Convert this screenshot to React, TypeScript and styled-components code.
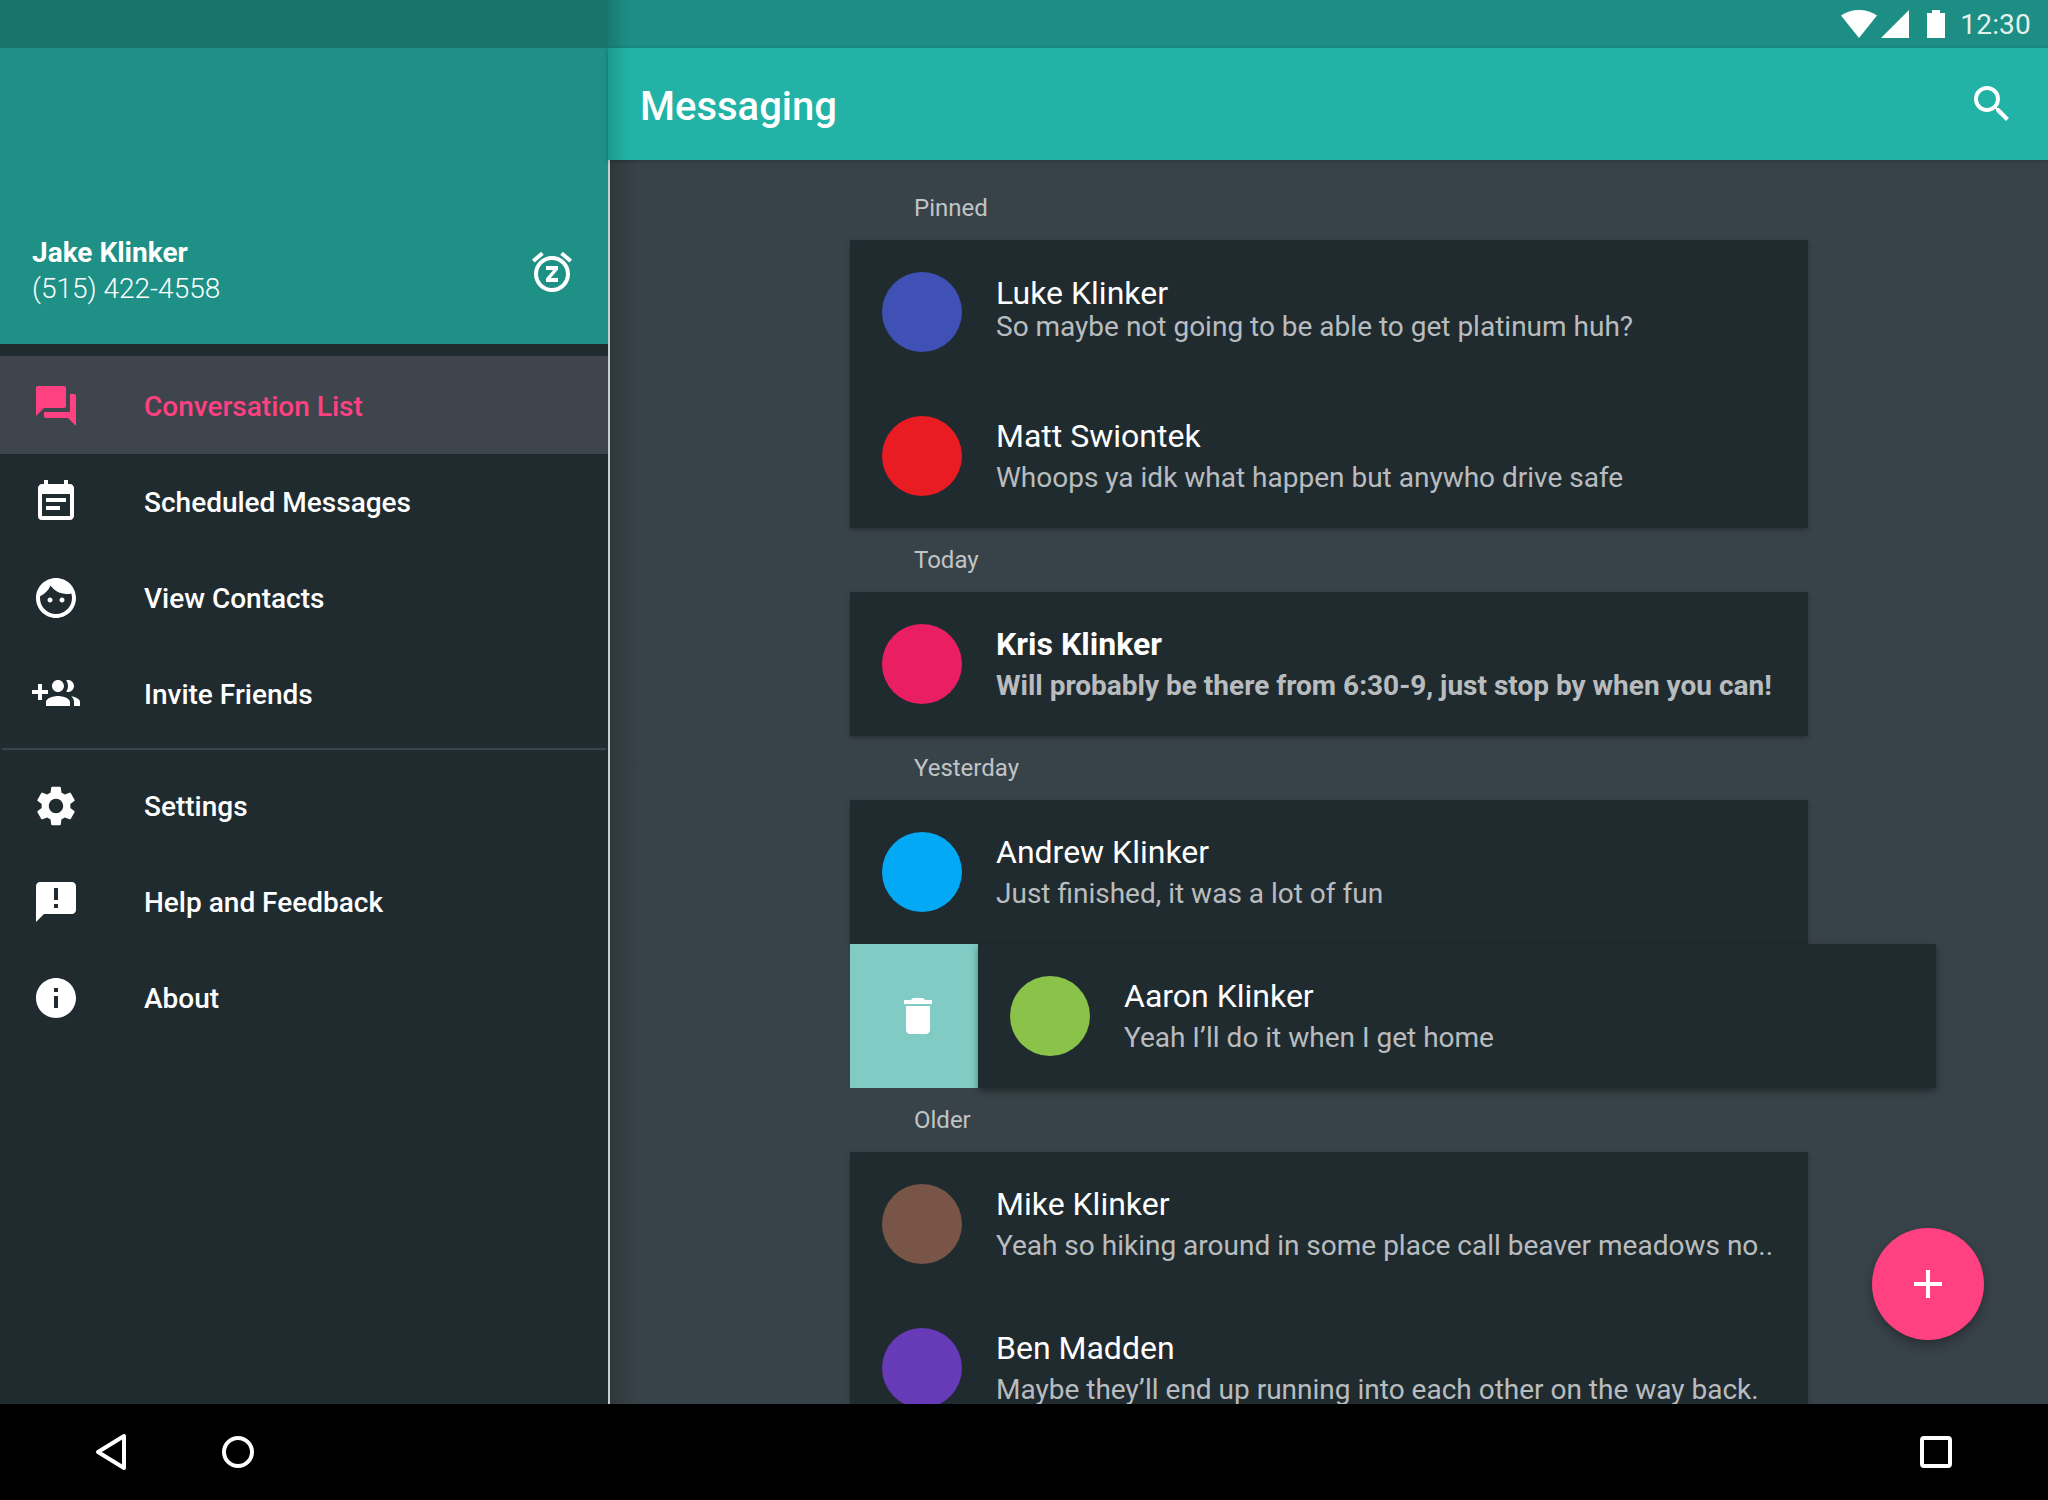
import React from 'react';
import styled, { createGlobalStyle } from 'styled-components';
import {
  MdAdd,
  MdAnnouncement,
  MdDelete,
  MdEventNote,
  MdForum,
  MdInfo,
  MdSearch,
  MdSettings,
  MdSnooze,
} from 'react-icons/md';

const GlobalStyle = createGlobalStyle`
  html, body {
    margin: 0;
    padding: 0;
    height: 1500px;
    overflow: hidden;
    background: #000;
  }
  * {
    box-sizing: border-box;
  }
`;

const Screen = styled.div`
  width: 2048px;
  height: 1500px;
  display: flex;
  flex-direction: column;
  overflow: hidden;
  font-family: Roboto, "Liberation Sans", sans-serif;
  color: #fff;
`;

const Body = styled.div`
  flex: 1;
  min-height: 0;
  display: flex;
`;

const Drawer = styled.aside`
  width: 608px;
  flex-shrink: 0;
  display: flex;
  flex-direction: column;
  background: #202b30;
`;

const DrawerStatus = styled.div`
  height: 48px;
  background: #18736b;
`;

const DrawerHeader = styled.div`
  height: 296px;
  padding: 187px 32px 0;
  display: flex;
  justify-content: space-between;
  background: #1e9085;
`;

const Account = styled.div`
  display: flex;
  flex-direction: column;
`;

const AccountName = styled.div`
  font-size: 28px;
  line-height: 36px;
  font-weight: 700;
`;

const AccountPhone = styled.div`
  font-size: 28px;
  line-height: 36px;
  font-weight: 300;
`;

const SnoozeButton = styled.div`
  display: flex;
  font-size: 48px;
  height: 48px;
  margin-top: 13px;
`;

const Menu = styled.nav`
  padding-top: 12px;
  display: flex;
  flex-direction: column;
`;

const MenuRow = styled.div<{ $active?: boolean }>`
  height: ${(p) => (p.$active ? 98 : 96)}px;
  padding: ${(p) => (p.$active ? '2px' : '0')} 0 0 32px;
  display: flex;
  align-items: center;
  gap: 64px;
  font-size: 28px;
  font-weight: 500;
  background: ${(p) => (p.$active ? '#3e454c' : 'transparent')};
  color: ${(p) => (p.$active ? '#ff4081' : '#fff')};

  & > svg {
    flex-shrink: 0;
  }
`;

const MenuDivider = styled.div`
  height: 2px;
  margin: 6px 2px 8px;
  background: #37444a;
`;

const Main = styled.main`
  position: relative;
  flex: 1;
  min-width: 0;
  display: flex;
  flex-direction: column;
`;

const StatusBar = styled.div`
  height: 48px;
  padding-right: 17px;
  display: flex;
  justify-content: flex-end;
  align-items: center;
  background: linear-gradient(90deg, rgba(0, 0, 0, 0.14), transparent 20px), #1c8e84;
`;

const StatusIcons = styled.div`
  display: flex;
  align-items: center;
  margin-right: 15px;
  height: 48px;
`;

const Clock = styled.span`
  font-size: 28px;
  letter-spacing: 0.2px;
  color: rgba(255, 255, 255, 0.9);
`;

const Toolbar = styled.header`
  position: relative;
  z-index: 2;
  height: 112px;
  padding: 0 32px;
  display: flex;
  align-items: center;
  justify-content: space-between;
  background: linear-gradient(90deg, rgba(0, 0, 0, 0.14), transparent 20px), #22b3a6;
  box-shadow: 0 1px 4px rgba(0, 0, 0, 0.25);
`;

const Title = styled.h1`
  margin: 4px 0 0;
  font-size: 40px;
  font-weight: 500;
`;

const Content = styled.div`
  flex: 1;
  min-height: 0;
  overflow: hidden;
  padding-left: 240px;
  border-left: 2px solid #c9cccd;
  background: linear-gradient(90deg, rgba(0, 0, 0, 0.18), transparent 30px), #384349;
`;

const Feed = styled.div`
  width: 958px;
  display: flex;
  flex-direction: column;
`;

const SectionLabel = styled.div<{ $first?: boolean }>`
  height: ${(p) => (p.$first ? 80 : 64)}px;
  padding: ${(p) => (p.$first ? 32 : 16)}px 0 0 64px;
  font-size: 24px;
  line-height: 32px;
  color: rgba(255, 255, 255, 0.7);
`;

const Card = styled.section`
  background: #202b30;
  box-shadow: 0 2px 5px rgba(0, 0, 0, 0.3);
`;

const Row = styled.div`
  height: 144px;
  padding: 32px 32px 0;
  display: flex;
  align-items: flex-start;
  gap: 34px;
  background: #202b30;

  & + & {
    box-shadow: inset 0 -1px 0 #1f2a2f, 0 -1px 0 #1f2a2f;
  }
`;

const Avatar = styled.div<{ $color: string }>`
  width: 80px;
  height: 80px;
  flex-shrink: 0;
  border-radius: 50%;
  background: ${(p) => p.$color};
`;

const RowText = styled.div<{ $unread?: boolean }>`
  min-width: 0;
  display: flex;
  flex-direction: column;
  font-weight: ${(p) => (p.$unread ? 700 : 400)};
`;

const Name = styled.div<{ $tight?: boolean }>`
  margin-top: ${(p) => (p.$tight ? 1 : 0)}px;
  font-size: 32px;
  line-height: 40px;
  color: #fff;
`;

const Snippet = styled.div<{ $tight?: boolean }>`
  margin-top: ${(p) => (p.$tight ? -6 : 2)}px;
  font-size: 28px;
  line-height: 40px;
  white-space: nowrap;
  color: rgba(255, 255, 255, 0.7);
`;

const SwipedRow = styled.div`
  position: relative;
  width: 1086px;
  height: 144px;
  display: flex;
`;

const DeleteBacking = styled.div`
  width: 128px;
  flex-shrink: 0;
  padding-left: 8px;
  display: flex;
  align-items: center;
  justify-content: center;
  background: #80cbc4;
  font-size: 48px;
`;

const SwipedContent = styled(Row)`
  flex: 1;
  box-shadow: 0 3px 7px rgba(0, 0, 0, 0.4);
`;

const Fab = styled.button`
  position: absolute;
  right: 64px;
  bottom: 64px;
  width: 112px;
  height: 112px;
  padding: 0;
  display: flex;
  align-items: center;
  justify-content: center;
  border: none;
  border-radius: 50%;
  color: #fff;
  background: #ff4081;
  font-size: 48px;
  box-shadow: 0 6px 12px rgba(0, 0, 0, 0.3);
`;

const NavBar = styled.footer`
  height: 96px;
  flex-shrink: 0;
  padding: 0 96px 0 95px;
  display: flex;
  align-items: center;
  gap: 95px;
  background: #000;

  & > :last-child {
    margin-left: auto;
  }
`;

// older material drawings, the ones in the package have changed
const GroupAddIcon: React.FC<{ size?: number }> = ({ size }) => (
  <svg width={size} height={size} viewBox="0 0 24 24" fill="currentColor">
    <path d="M8 10H5V7H3v3H0v2h3v3h2v-3h3v-2zm10 1c1.66 0 2.99-1.34 2.99-3S19.66 5 18 5c-.32 0-.63.05-.91.14.57.81.9 1.79.9 2.86s-.34 2.04-.9 2.86c.28.09.59.14.91.14zm-5 0c1.66 0 2.99-1.34 2.99-3S14.66 5 13 5s-3 1.34-3 3 1.34 3 3 3zm6.62 2.16c.83.73 1.38 1.66 1.38 2.84v2h3v-2c0-1.54-2.37-2.49-4.38-2.84zM13 13c-2 0-6 1-6 3v2h12v-2c0-2-4-3-6-3z" />
  </svg>
);

const FaceIcon: React.FC<{ size?: number }> = ({ size }) => (
  <svg width={size} height={size} viewBox="0 0 24 24" fill="currentColor">
    <path d="M9 11.750c-.69 0-1.250.56-1.250 1.250s.56 1.250 1.250 1.250 1.250-.56 1.250-1.250-.56-1.250-1.250-1.250zm6 0c-.69 0-1.250.56-1.250 1.250s.56 1.250 1.250 1.250 1.250-.56 1.250-1.250-.56-1.250-1.250-1.250zM12 2C6.480 2 2 6.480 2 12s4.480 10 10 10 10-4.480 10-10S17.520 2 12 2zm0 18c-4.410 0-8-3.590-8-8 0-.29.02-.58.05-.86 2.360-1.050 4.230-2.980 5.210-5.370C11.070 8.330 14.050 10 17.420 10c.78 0 1.530-.09 2.250-.26.21.71.33 1.470.33 2.260 0 4.410-3.590 8-8 8z" />
  </svg>
);

const menuTop = [
  { label: 'Conversation List', icon: MdForum, active: true },
  { label: 'Scheduled Messages', icon: MdEventNote },
  { label: 'View Contacts', icon: FaceIcon },
  { label: 'Invite Friends', icon: GroupAddIcon },
];

const menuBottom = [
  { label: 'Settings', icon: MdSettings },
  { label: 'Help and Feedback', icon: MdAnnouncement },
  { label: 'About', icon: MdInfo },
];

const renderMenuRow = (item: { label: string; icon: React.ComponentType<{ size?: number }>; active?: boolean }) => {
  const Icon = item.icon;
  return (
    <MenuRow key={item.label} $active={item.active}>
      <Icon size={48} />
      {item.label}
    </MenuRow>
  );
};

const Conversation: React.FC<{
  name: string;
  snippet: string;
  color: string;
  unread?: boolean;
  tight?: boolean;
}> = ({ name, snippet, color, unread, tight }) => (
  <Row>
    <Avatar $color={color} />
    <RowText $unread={unread}>
      <Name $tight={tight}>{name}</Name>
      <Snippet $tight={tight}>{snippet}</Snippet>
    </RowText>
  </Row>
);

const App: React.FC = () => (
  <Screen>
    <GlobalStyle />
    <Body>
      <Drawer>
        <DrawerStatus />
        <DrawerHeader>
          <Account>
            <AccountName>Jake Klinker</AccountName>
            <AccountPhone>(515) 422-4558</AccountPhone>
          </Account>
          <SnoozeButton>
            <MdSnooze />
          </SnoozeButton>
        </DrawerHeader>
        <Menu>
          {menuTop.map(renderMenuRow)}
          <MenuDivider />
          {menuBottom.map(renderMenuRow)}
        </Menu>
      </Drawer>
      <Main>
        <StatusBar>
          <StatusIcons>
            <svg width="104" height="28" viewBox="0 0 104 28" fill="#fff">
              <path d="M0 5.500C5 2 11 0 18 0s13 2 18 5.500L18 28z" />
              <path d="M40 28 68 0v28z" />
              <path d="M86 28V3h5V0h8v3h5v25z" />
            </svg>
          </StatusIcons>
          <Clock>12:30</Clock>
        </StatusBar>
        <Toolbar>
          <Title>Messaging</Title>
          <MdSearch size={48} />
        </Toolbar>
        <Content>
          <Feed>
            <SectionLabel $first>Pinned</SectionLabel>
            <Card>
              <Conversation name="Luke Klinker" snippet="So maybe not going to be able to get platinum huh?" color="#3f51b5" tight />
              <Conversation name="Matt Swiontek" snippet="Whoops ya idk what happen but anywho drive safe" color="#e91c23" />
            </Card>
            <SectionLabel>Today</SectionLabel>
            <Card>
              <Conversation name="Kris Klinker" snippet="Will probably be there from 6:30-9, just stop by when you can!" color="#e91e63" unread />
            </Card>
            <SectionLabel>Yesterday</SectionLabel>
            <Card>
              <Conversation name="Andrew Klinker" snippet="Just finished, it was a lot of fun" color="#03a9f4" />
            </Card>
            <SwipedRow>
              <DeleteBacking>
                <MdDelete />
              </DeleteBacking>
              <SwipedContent>
                <Avatar $color="#8bc34a" />
                <RowText>
                  <Name>Aaron Klinker</Name>
                  <Snippet>Yeah I’ll do it when I get home</Snippet>
                </RowText>
              </SwipedContent>
            </SwipedRow>
            <SectionLabel>Older</SectionLabel>
            <Card>
              <Conversation name="Mike Klinker" snippet="Yeah so hiking around in some place call beaver meadows no.." color="#795548" />
              <Conversation name="Ben Madden" snippet="Maybe they’ll end up running into each other on the way back." color="#673ab7" />
            </Card>
          </Feed>
        </Content>
        <Fab>
          <MdAdd />
        </Fab>
      </Main>
    </Body>
    <NavBar>
      <svg width="32" height="38" viewBox="0 0 32 38" fill="none" stroke="#fff" strokeWidth="4" strokeLinejoin="round">
        <path d="M29 3v32L3 19z" />
      </svg>
      <svg width="32" height="32" viewBox="0 0 32 32" fill="none" stroke="#fff" strokeWidth="4">
        <circle cx="16" cy="16" r="14" />
      </svg>
      <svg width="32" height="32" viewBox="0 0 32 32" fill="none" stroke="#fff" strokeWidth="4" strokeLinejoin="round">
        <rect x="2" y="2" width="28" height="28" rx="2" />
      </svg>
    </NavBar>
  </Screen>
);

export default App;
